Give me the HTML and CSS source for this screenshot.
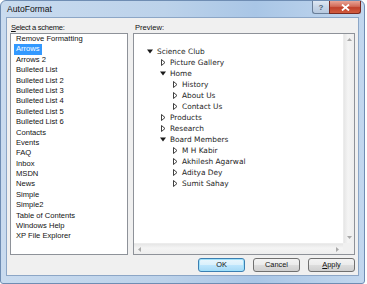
FILE: index.html
```html
<!DOCTYPE html>
<html>
<head>
<meta charset="utf-8">
<link rel="stylesheet" href="styles.css">
</head>
<body>
<div class="window">
  <div class="titlebar">
    <span class="title">AutoFormat</span>
    <div class="caption-buttons">
      <div class="cap-btn cap-help">?</div>
      <div class="cap-btn cap-close">
        <svg width="9" height="7" viewBox="0 0 9 7"><path d="M1 0.5 L8 6.5 M8 0.5 L1 6.5" stroke="#fff" stroke-width="1.8"/></svg>
      </div>
    </div>
  </div>
  <div class="client">
    <div class="panes">
      <div class="pane">
        <div class="label label-scheme"><u>S</u>elect a scheme:</div>
        <ul class="listbox">
          <li>Remove Formatting</li>
          <li class="selected">Arrows</li>
          <li>Arrows 2</li>
          <li>Bulleted List</li>
          <li>Bulleted List 2</li>
          <li>Bulleted List 3</li>
          <li>Bulleted List 4</li>
          <li>Bulleted List 5</li>
          <li>Bulleted List 6</li>
          <li>Contacts</li>
          <li>Events</li>
          <li>FAQ</li>
          <li>Inbox</li>
          <li>MSDN</li>
          <li>News</li>
          <li>Simple</li>
          <li>Simple2</li>
          <li>Table of Contents</li>
          <li>Windows Help</li>
          <li>XP File Explorer</li>
        </ul>
      </div>
      <div class="pane">
        <div class="label">Preview:</div>
        <div class="preview">
          <div class="tree">
            <div class="row lvl0"><svg class="tri" width="6" height="7" viewBox="0 0 6 7"><polygon points="0,1.5 6,1.5 3,5.5" fill="#1a1a1a"/></svg><span>Science Club</span></div>
            <div class="row lvl1"><svg class="tri" width="6" height="7" viewBox="0 0 6 7"><polygon points="1.5,0.5 1.5,6.5 5,3.5" fill="#fff" stroke="#2a2a2a" stroke-width="0.9"/></svg><span>Picture Gallery</span></div>
            <div class="row lvl1"><svg class="tri" width="6" height="7" viewBox="0 0 6 7"><polygon points="0,1.5 6,1.5 3,5.5" fill="#1a1a1a"/></svg><span>Home</span></div>
            <div class="row lvl2"><svg class="tri" width="6" height="7" viewBox="0 0 6 7"><polygon points="1.5,0.5 1.5,6.5 5,3.5" fill="#fff" stroke="#2a2a2a" stroke-width="0.9"/></svg><span>History</span></div>
            <div class="row lvl2"><svg class="tri" width="6" height="7" viewBox="0 0 6 7"><polygon points="1.5,0.5 1.5,6.5 5,3.5" fill="#fff" stroke="#2a2a2a" stroke-width="0.9"/></svg><span>About Us</span></div>
            <div class="row lvl2"><svg class="tri" width="6" height="7" viewBox="0 0 6 7"><polygon points="1.5,0.5 1.5,6.5 5,3.5" fill="#fff" stroke="#2a2a2a" stroke-width="0.9"/></svg><span>Contact Us</span></div>
            <div class="row lvl1"><svg class="tri" width="6" height="7" viewBox="0 0 6 7"><polygon points="1.5,0.5 1.5,6.5 5,3.5" fill="#fff" stroke="#2a2a2a" stroke-width="0.9"/></svg><span>Products</span></div>
            <div class="row lvl1"><svg class="tri" width="6" height="7" viewBox="0 0 6 7"><polygon points="1.5,0.5 1.5,6.5 5,3.5" fill="#fff" stroke="#2a2a2a" stroke-width="0.9"/></svg><span>Research</span></div>
            <div class="row lvl1"><svg class="tri" width="6" height="7" viewBox="0 0 6 7"><polygon points="0,1.5 6,1.5 3,5.5" fill="#1a1a1a"/></svg><span>Board Members</span></div>
            <div class="row lvl2"><svg class="tri" width="6" height="7" viewBox="0 0 6 7"><polygon points="1.5,0.5 1.5,6.5 5,3.5" fill="#fff" stroke="#2a2a2a" stroke-width="0.9"/></svg><span>M H Kabir</span></div>
            <div class="row lvl2"><svg class="tri" width="6" height="7" viewBox="0 0 6 7"><polygon points="1.5,0.5 1.5,6.5 5,3.5" fill="#fff" stroke="#2a2a2a" stroke-width="0.9"/></svg><span>Akhilesh Agarwal</span></div>
            <div class="row lvl2"><svg class="tri" width="6" height="7" viewBox="0 0 6 7"><polygon points="1.5,0.5 1.5,6.5 5,3.5" fill="#fff" stroke="#2a2a2a" stroke-width="0.9"/></svg><span>Aditya Dey</span></div>
            <div class="row lvl2"><svg class="tri" width="6" height="7" viewBox="0 0 6 7"><polygon points="1.5,0.5 1.5,6.5 5,3.5" fill="#fff" stroke="#2a2a2a" stroke-width="0.9"/></svg><span>Sumit Sahay</span></div>
          </div>
          <div class="vscroll">
            <div class="sb-btn"><svg width="5" height="3" viewBox="0 0 5 3"><polygon points="0,3 5,3 2.5,0" fill="#a8a8a8"/></svg></div>
            <div class="sb-track"></div>
            <div class="sb-btn"><svg width="5" height="3" viewBox="0 0 5 3"><polygon points="0,0 5,0 2.5,3" fill="#a8a8a8"/></svg></div>
          </div>
          <div class="hscroll">
            <div class="sb-btn"><svg width="3" height="5" viewBox="0 0 3 5"><polygon points="3,0 3,5 0,2.5" fill="#a8a8a8"/></svg></div>
            <div class="sb-track"></div>
            <div class="sb-btn"><svg width="3" height="5" viewBox="0 0 3 5"><polygon points="0,0 0,5 3,2.5" fill="#a8a8a8"/></svg></div>
          </div>
          <div class="corner"></div>
        </div>
      </div>
    </div>
    <div class="buttons">
      <div class="button default">OK</div>
      <div class="button">Cancel</div>
      <div class="button"><u>A</u>pply</div>
    </div>
  </div>
</div>
</body>
</html>
```

FILE: styles.css
```css
html, body {
  margin: 0;
  padding: 0;
  background: #ffffff;
}
body {
  font-family: "Liberation Sans", Arial, sans-serif;
  width: 367px;
  height: 284px;
  overflow: hidden;
}
.window {
  box-sizing: border-box;
  width: 365px;
  height: 284px;
  border: 1px solid #6f8db3;
  border-radius: 6px 6px 3px 3px;
  background: linear-gradient(to right, #c9dbef 0%, #bcd2ea 45%, #a9c6e6 70%, #c2d7ee 100%);
  padding: 0 5px 7px 5px;
  display: flex;
  flex-direction: column;
}
.titlebar {
  height: 16px;
  display: flex;
  align-items: flex-start;
  justify-content: space-between;
}
.title {
  font-size: 8.6px;
  line-height: 16px;
  color: #111;
  padding-left: 1px;
}
.caption-buttons {
  display: flex;
  margin-right: -2px;
}
.cap-btn {
  height: 13px;
  box-sizing: border-box;
  border: 1px solid #6a7f99;
  border-top: none;
  display: flex;
  align-items: center;
  justify-content: center;
}
.cap-help {
  width: 17px;
  border-right: none;
  border-radius: 0 0 0 3px;
  background: linear-gradient(#dfe8f3, #c6d5e7 50%, #b7c9df);
  font-size: 8px;
  color: #4b5d75;
  font-weight: bold;
}
.cap-close {
  width: 32px;
  border-color: #7a2a22;
  border-radius: 0 0 3px 0;
  background: linear-gradient(#e9a597, #d26b58 45%, #c0412c 55%, #d15c3e);
}
.client {
  flex: 1;
  box-sizing: border-box;
  border: 1px solid #8ca6c6;
  background: #f0f0f0;
  padding: 4px 3px 3px 3px;
  display: flex;
  flex-direction: column;
}
.panes {
  display: grid;
  grid-template-columns: 118px 1fr;
  column-gap: 5px;
}
.pane {
  display: flex;
  flex-direction: column;
}
.label {
  font-size: 7.6px;
  line-height: 11px;
  height: 11px;
  color: #111;
  padding-left: 1px;
}
.label-scheme {
  letter-spacing: -0.3px;
}
.pane + .pane .label {
  padding-left: 2px;
}
.listbox {
  box-sizing: border-box;
  height: 222px;
  margin: 0;
  padding: 0 0 0 3px;
  list-style: none;
  background: #fff;
  border: 1px solid #8e9299;
  font-size: 7.6px;
  line-height: 10.4px;
  color: #111;
}
.listbox li {
  display: block;
  width: max-content;
  padding: 0 2px;
  height: 10.4px;
}
.listbox li.selected {
  background: #3399ff;
  color: #fff;
}
.preview {
  box-sizing: border-box;
  height: 222px;
  background: #fff;
  border: 1px solid #8e9299;
  display: grid;
  grid-template-columns: 1fr 11px;
  grid-template-rows: 1fr 11px;
}
.tree {
  padding-top: 12px;
  font-family: "DejaVu Sans", Verdana, sans-serif;
  font-size: 7.4px;
  line-height: 11px;
  color: #1e1e1e;
}
.row {
  display: flex;
  align-items: center;
  height: 11px;
}
.row .tri {
  flex: none;
  margin-right: 4px;
}
.lvl0 { padding-left: 13px; }
.lvl1 { padding-left: 26px; }
.lvl2 { padding-left: 38px; }
.vscroll {
  display: flex;
  flex-direction: column;
  background: linear-gradient(to right, #e6e6e6, #f4f4f4 40%, #eeeeee);
  border-left: 1px solid #ececec;
}
.hscroll {
  display: flex;
  background: linear-gradient(#e6e6e6, #f4f4f4 40%, #eeeeee);
  border-top: 1px solid #ececec;
}
.sb-btn {
  flex: none;
  width: 11px;
  height: 11px;
  display: flex;
  align-items: center;
  justify-content: center;
}
.sb-track {
  flex: 1;
}
.corner {
  background: #f0f0f0;
}
.buttons {
  margin-top: 3px;
  display: flex;
  justify-content: flex-end;
  gap: 8px;
}
.button {
  box-sizing: border-box;
  width: 47px;
  height: 14px;
  border: 1px solid #707070;
  border-radius: 3px;
  background: linear-gradient(#f3f3f3 0%, #ebebeb 50%, #dddddd 51%, #cfcfcf 100%);
  font-size: 7.4px;
  line-height: 12px;
  text-align: center;
  color: #111;
}
.button.default {
  border-color: #3c7fb1;
  box-shadow: inset 0 0 0 1px #9fe1fb;
  background: linear-gradient(#eaf6fd 0%, #d9f0fc 50%, #bee6fd 51%, #a7d9f5 100%);
}
```
